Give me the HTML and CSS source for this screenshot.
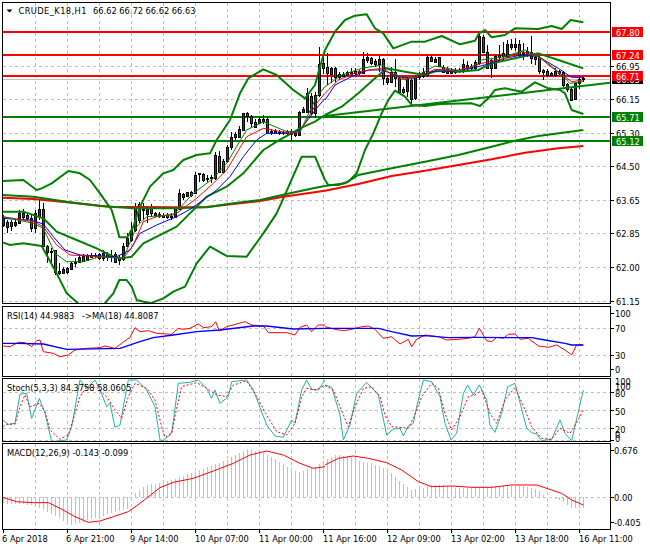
FILE: index.html
```html
<!DOCTYPE html>
<html lang="en">
<head>
<meta charset="utf-8">
<title>CRUDE_K18,H1</title>
<link rel="stylesheet" href="styles.css">
</head>
<body>
<main class="terminal">
  <svg class="pane" width="650" height="305" viewBox="0 0 650 305">
    <defs><clipPath id="clip-main"><rect x="3" y="3" width="607" height="300"/></clipPath></defs>
    <g clip-path="url(#clip-main)">
      <path class="grid" d="M35.5 3V303M67.5 3V303M99.5 3V303M131.5 3V303M163.5 3V303M195.5 3V303M227.5 3V303M259.5 3V303M291.5 3V303M323.5 3V303M355.5 3V303M387.5 3V303M419.5 3V303M451.5 3V303M483.5 3V303M515.5 3V303M547.5 3V303M579.5 3V303"/>
      <path class="grid" d="M3 66.5H610M3 99.5H610M3 133.5H610M3 166.5H610M3 200.5H610M3 233.5H610M3 267.5H610M3 301.5H610"/>
      <path class="bid" d="M3 79.5H610"/>
      <path class="level red" d="M3 32H610M3 55H610M3 76H610"/>
      <path class="level green" d="M3 117H610M3 141H610"/>
      <g id="candles"></g>
      <g transform="scale(.33333)">
        <polyline class="thick green" points="8,543 70,540 110,570 125,565 155,550 205,513 240,520 270,540 300,580 335,630 350,680 358,712 382,712 400,680 420,620 450,560 490,520 520,510 550,480 590,465 630,460 650,420 690,360 720,280 745,235 790,208 830,225 880,270 915,295 945,255 960,200 975,150"/>
        <polyline class="thick green" points="8,635 70,635 130,655 170,695 230,720 290,745 340,770 365,775 395,770 430,730 490,700 530,680 560,650 620,590 680,560 730,520 790,450 830,425 900,385 945,365 975,345"/>
        <polyline class="thick green" points="8,727 30,735 70,730 125,738 170,820 200,880 240,915 310,915 340,880 358,840 380,840 395,860 410,900 450,910 490,895 520,875 555,860 590,790 630,740 680,768 740,770 790,700 830,640 870,550 905,470 945,470 975,540"/>
        <polyline class="thick red" points="8,593 100,597 200,607 330,620 520,622 620,621 700,612 780,603 850,590 975,572"/>
        <polyline class="thick green" points="8,585 100,590 200,605 300,618 400,625 520,625 620,622 700,610 780,600 860,582 940,565 975,558"/>
        <polyline class="thin blue" points="8,655 50,658 90,660 130,672 160,710 195,750 240,765 300,768 350,770 390,750 420,700 470,675 530,650 570,628 610,600 650,570 690,530 730,470 770,420 800,400 870,400 900,390 950,325 975,295"/>
        <polyline class="thin red" points="8,650 100,665 130,680 170,735 210,765 300,770 370,775 400,735 430,665 470,650 530,640 590,595 640,550 680,510 740,410 790,385 870,400 900,395 950,310 975,280"/>
        <polyline class="thin green" points="8,650 100,670 130,685 165,760 200,785 250,785 300,770 370,775 410,680 440,650 520,645 580,580 640,535 680,490 740,390 790,365 860,395 900,395 950,290 975,260"/>
      </g>
      <g transform="translate(325 0) scale(.33333)">
        <polyline class="thick green" points="0,150 30,95 60,60 90,47 125,43 150,85 175,100 205,145 260,125 300,125 350,108 405,133 450,122 462,100 480,90 500,112 540,105 570,85 640,87 680,78 710,87 737,60 775,67"/>
        <polyline class="thick green" points="0,345 50,320 100,280 150,235 185,205 240,215 300,225 340,210 400,215 460,210 500,190 570,175 640,160 700,180 775,205"/>
        <polyline class="thick green" points="0,540 10,555 40,555 70,545 95,520 120,450 145,400 170,340 190,300 210,272 240,290 260,315 300,318 345,312 440,310 465,318 490,295 510,270 540,265 590,275 630,247 670,265 705,270 720,280 740,330 775,342"/>
        <polyline class="thick red" points="0,572 100,552 200,528 300,512 400,495 500,478 600,458 700,445 775,438"/>
        <polyline class="thick green" points="0,558 60,550 100,525 200,505 300,485 400,465 500,440 570,422 640,408 775,390"/>
        <polyline class="thick green" points="0,348 857,248"/>
        <polyline class="thin blue" points="0,300 30,255 80,230 130,210 170,210 230,232 270,235 320,215 370,215 440,205 480,195 540,175 590,165 640,170 700,205 740,232 775,232"/>
        <polyline class="thin red" points="0,280 40,240 100,215 170,205 230,238 280,230 330,208 400,212 470,190 540,175 590,155 640,170 690,210 740,245 775,240"/>
        <polyline class="thin green" points="0,260 50,225 110,205 170,195 240,240 280,225 330,198 420,215 470,180 540,170 600,150 650,175 700,215 735,250 775,245"/>
      </g>
    </g>
    <rect class="frame" x="2.5" y="2.5" width="608" height="301"/>
    <path class="marker" d="M6.5 9.5h6l-3 3z"/>
    <text class="label symbol" x="18.5" y="14">CRUDE_K18,H1</text>
    <text class="label" x="93" y="14">66.62 66.72 66.62 66.63</text>
    <path class="tick" d="M611 66.5h3M611 99.5h3M611 133.5h3M611 166.5h3M611 200.5h3M611 233.5h3M611 267.5h3M611 301.5h3"/>
    <text class="label" x="616" y="70">66.95</text>
    <text class="label" x="616" y="103">66.15</text>
    <text class="label" x="616" y="137">65.30</text>
    <text class="label" x="616" y="170">64.50</text>
    <text class="label" x="616" y="204">63.65</text>
    <text class="label" x="616" y="237">62.85</text>
    <text class="label" x="616" y="271">62.00</text>
    <text class="label" x="616" y="305">61.15</text>
    <rect class="tag-black" x="612" y="74" width="31" height="10"/>
    <text class="label on-tag" x="616" y="83">66.63</text>
    <rect class="tag-red" x="612" y="27" width="31" height="10"/>
    <text class="label on-tag" x="616" y="36">67.80</text>
    <rect class="tag-red" x="612" y="50" width="31" height="10"/>
    <text class="label on-tag" x="616" y="59">67.24</text>
    <rect class="tag-red" x="612" y="71" width="31" height="10"/>
    <text class="label on-tag" x="616" y="80">66.71</text>
    <rect class="tag-green" x="612" y="112" width="31" height="10"/>
    <text class="label on-tag" x="616" y="121">65.71</text>
    <rect class="tag-green" x="612" y="136" width="31" height="10"/>
    <text class="label on-tag" x="616" y="145">65.12</text>
  </svg>

  <svg class="pane" width="650" height="72" viewBox="0 305 650 72">
    <path class="grid" d="M35.5 307V376M67.5 307V376M99.5 307V376M131.5 307V376M163.5 307V376M195.5 307V376M227.5 307V376M259.5 307V376M291.5 307V376M323.5 307V376M355.5 307V376M387.5 307V376M419.5 307V376M451.5 307V376M483.5 307V376M515.5 307V376M547.5 307V376M579.5 307V376"/>
    <path class="grid" d="M3 328.5H610M3 355.5H610"/>
    <g transform="translate(0 300) scale(.33333)">
      <polyline class="thin red" points="8,138 30,140 55,127 75,128 95,140 110,122 120,120 130,155 160,160 180,170 205,165 225,150 260,145 300,143 315,138 345,145 365,130 390,112 405,83 420,95 445,92 470,100 515,103 535,85 550,88 570,85 595,72 610,83 635,80 647,65 658,93 680,80 710,72 735,65 755,75 790,78 805,98 860,98 885,105 900,82 920,75 935,95 955,75 975,75"/>
      <polyline class="mid blue" points="8,130 50,130 130,132 200,148 360,145 420,125 460,113 520,105 590,95 660,90 760,78 800,78 880,87 975,85"/>
    </g>
    <g transform="translate(325 300) scale(.33333)">
      <polyline class="thin red" points="0,80 30,88 55,92 80,88 110,80 130,78 150,88 175,115 200,110 225,132 250,118 260,140 275,118 300,105 340,110 365,120 400,118 430,115 450,110 463,85 485,122 500,125 515,112 535,115 550,103 570,102 585,118 610,115 640,138 670,142 695,135 720,150 740,165 755,135 775,135"/>
      <polyline class="mid blue" points="0,85 160,85 200,95 260,108 300,107 370,113 450,112 620,113 660,120 720,130 740,135 775,135"/>
    </g>
    <rect class="frame" x="2.5" y="306.5" width="608" height="70"/>
    <text class="label" x="7" y="319">RSI(14) 44.9883   -&gt;MA(18) 44.8087</text>
    <path class="tick" d="M611 313.5h3M611 328.5h3M611 355.5h3M611 369.5h3"/>
    <text class="label" x="615" y="317">100</text>
    <text class="label" x="615" y="332">70</text>
    <text class="label" x="615" y="359">30</text>
    <text class="label" x="615" y="373">0</text>
  </svg>

  <svg class="pane" width="650" height="65" viewBox="0 377 650 65">
    <defs><clipPath id="clip-stoch"><rect x="3" y="379" width="607" height="62"/></clipPath></defs>
    <path class="grid" d="M35.5 379V441M67.5 379V441M99.5 379V441M131.5 379V441M163.5 379V441M195.5 379V441M227.5 379V441M259.5 379V441M291.5 379V441M323.5 379V441M355.5 379V441M387.5 379V441M419.5 379V441M451.5 379V441M483.5 379V441M515.5 379V441M547.5 379V441M579.5 379V441"/>
    <path class="grid" d="M3 392.5H610M3 410.5H610M3 428.5H610M3 440.5H610"/>
    <g clip-path="url(#clip-stoch)">
      <g transform="translate(0 300) scale(.33333)">
        <polyline class="thin teal" points="8,360 25,373 45,370 60,282 80,280 95,355 118,295 135,340 155,425 200,420 215,380 240,240 260,265 285,240 300,270 320,320 330,310 345,382 360,375 385,240 410,240 440,270 465,320 480,420 490,422 515,400 535,250 570,247 595,240 620,265 635,295 645,270 660,310 685,290 695,245 740,240 760,270 800,375 825,408 850,412 875,360 885,370 905,270 920,240 935,268 955,270 975,240"/>
        <polyline class="thin dashed" points="8,380 20,373 45,372 60,320 75,285 90,320 118,310 135,335 150,390 180,418 205,405 225,340 240,290 260,262 290,262 320,290 345,330 365,355 385,290 405,250 440,265 465,300 485,380 495,412 515,400 530,325 545,260 590,248 620,265 650,285 680,290 700,255 740,243 770,290 800,345 830,395 860,405 885,370 905,290 920,265 950,270 975,255"/>
      </g>
      <g transform="translate(325 300) scale(.33333)">
        <polyline class="thin teal" points="0,255 20,262 45,345 55,420 75,375 95,280 125,247 160,285 185,405 205,387 225,385 235,408 250,378 265,370 275,320 295,240 320,245 345,290 360,370 378,420 395,400 415,280 428,255 445,285 463,255 485,300 495,375 510,397 530,340 548,260 570,250 605,385 620,398 635,402 650,422 680,418 705,360 720,400 740,422 775,270"/>
        <polyline class="thin dashed" points="0,257 25,270 45,320 70,380 90,320 115,265 140,260 165,290 180,345 200,380 225,382 250,385 265,355 290,290 320,250 340,265 360,340 380,390 405,350 430,290 450,285 470,270 495,340 515,370 540,300 570,262 600,330 620,380 650,415 680,418 705,385 735,400 765,350 775,328"/>
      </g>
    </g>
    <rect class="frame" x="2.5" y="378.5" width="608" height="63"/>
    <text class="label" x="7" y="391">Stoch(5,3,3) 84.3758 58.0605</text>
    <path class="tick" d="M611 392.5h3M611 410.5h3M611 428.5h3M611 440.5h3"/>
    <text class="label" x="615" y="385">100</text>
    <text class="label" x="615" y="389.5">100</text>
    <text class="label" x="615" y="396.5">80</text>
    <text class="label" x="615" y="414.5">50</text>
    <text class="label" x="615" y="432.5">20</text>
    <text class="label" x="615" y="438">0</text>
    <text class="label" x="615" y="442">0</text>
  </svg>

  <svg class="pane" width="650" height="108" viewBox="0 442 650 108">
    <path class="grid" d="M35.5 444V529M67.5 444V529M99.5 444V529M131.5 444V529M163.5 444V529M195.5 444V529M227.5 444V529M259.5 444V529M291.5 444V529M323.5 444V529M355.5 444V529M387.5 444V529M419.5 444V529M451.5 444V529M483.5 444V529M515.5 444V529M547.5 444V529M579.5 444V529"/>
    <path class="grid" d="M3 497.5H610"/>
    <g id="histogram"></g>
    <g transform="translate(0 300) scale(.33333)">
      <polyline class="thin red" points="8,592 50,605 100,608 145,608 180,625 225,650 265,667 300,663 340,650 385,635 420,610 480,563 520,547 580,535 640,513 700,490 750,465 800,453 850,465 900,490 940,505 975,500"/>
    </g>
    <g transform="translate(325 300) scale(.33333)">
      <polyline class="thin red" points="0,495 40,475 85,468 130,475 185,488 230,510 280,545 320,560 380,558 440,562 500,562 560,555 635,555 680,570 710,580 740,600 775,615"/>
    </g>
    <rect class="frame" x="2.5" y="443.5" width="608" height="86"/>
    <text class="label" x="7" y="456">MACD(12,26,9) -0.143 -0.099</text>
    <path class="tick" d="M611 450.5h3M611 497.5h3M611 522.5h3"/>
    <text class="label" x="614" y="454">0.676</text>
    <text class="label" x="614" y="501">0.00</text>
    <text class="label" x="614" y="526">-0.405</text>
    <path class="tick" d="M3.5 530v3M67.5 530v3M131.5 530v3M195.5 530v3M259.5 530v3M323.5 530v3M387.5 530v3M451.5 530v3M515.5 530v3M579.5 530v3"/>
    <text class="label" x="2" y="542">6 Apr 2018</text>
    <text class="label" x="66" y="542">6 Apr 21:00</text>
    <text class="label" x="130" y="542">9 Apr 14:00</text>
    <text class="label" x="195" y="542">10 Apr 07:00</text>
    <text class="label" x="259" y="542">11 Apr 00:00</text>
    <text class="label" x="323" y="542">11 Apr 16:00</text>
    <text class="label" x="387" y="542">12 Apr 09:00</text>
    <text class="label" x="451" y="542">13 Apr 02:00</text>
    <text class="label" x="515" y="542">13 Apr 18:00</text>
    <text class="label" x="579" y="542">16 Apr 11:00</text>
  </svg>
</main>
<script src="chart.js"></script>
</body>
</html>
```
FILE: styles.css
```css
html, body {
  margin: 0;
  padding: 0;
  background: #fff;
}
.terminal {
  display: flex;
  flex-direction: column;
  width: 650px;
  height: 550px;
  overflow: hidden;
}
.pane {
  display: block;
  flex: none;
  overflow: visible;
}
.grid {
  fill: none;
  stroke: #c0c0c0;
  stroke-width: 1;
  stroke-dasharray: 3 3;
  shape-rendering: crispEdges;
}
.bid {
  fill: none;
  stroke: #c0c0c0;
  stroke-width: 1;
  shape-rendering: crispEdges;
}
.level {
  fill: none;
  stroke-width: 2;
  shape-rendering: crispEdges;
}
.level.red { stroke: #ff0000; }
.level.green { stroke: #008000; }
polyline {
  fill: none;
  stroke-linejoin: round;
  vector-effect: non-scaling-stroke;
}
.thick { stroke-width: 2; }
.mid { stroke-width: 1.3; }
.thin { stroke-width: 1; }
polyline.green { stroke: #008000; }
polyline.red { stroke: #ff0000; }
polyline.blue { stroke: #0000ff; }
polyline.teal { stroke: #20b2aa; }
polyline.dashed { stroke: #ff0000; stroke-dasharray: 2 2; }
.frame {
  fill: none;
  stroke: #000;
  stroke-width: 1;
  shape-rendering: crispEdges;
}
.tick {
  fill: none;
  stroke: #000;
  stroke-width: 1;
  shape-rendering: crispEdges;
}
.marker { fill: #000; }
.label {
  font-family: "DejaVu Sans Condensed", "DejaVu Sans", sans-serif;
  font-stretch: condensed;
  font-size: 9.2px;
  fill: #000;
  white-space: pre;
}
.label.symbol { letter-spacing: 0.42px; }
.label.on-tag { fill: #fff; }
.tag-red { fill: #ff0000; }
.tag-green { fill: #008000; }
.tag-black { fill: #000; }
.wick {
  stroke: #000;
  stroke-width: 1;
  shape-rendering: crispEdges;
}
.body-bull {
  fill: #006400;
  stroke: #000;
  stroke-width: 1;
  shape-rendering: crispEdges;
}
.body-bear {
  fill: #ff0000;
  stroke: #000;
  stroke-width: 1;
  shape-rendering: crispEdges;
}
.hist {
  stroke: #c0c0c0;
  stroke-width: 1;
  shape-rendering: crispEdges;
}
```
FILE: chart.js
```js
var NS = 'http://www.w3.org/2000/svg';

// type, body top, body bottom, wick top, wick bottom (1/3 px units, read off the chart)
var CANDLES = 'g655,675,645,680 r665,680,660,700 r665,678,660,692 g667,675,660,680 g640,670,630,672 r640,650,628,660 r645,655,640,660 r655,685,645,697 g640,685,630,700 g628,648,600,660 r628,738,610,740 r737,755,735,790 g752,755,745,785 r750,815,750,825 g812,820,790,825 g808,818,800,822 r805,815,800,822 g788,808,785,810 g785,790,775,800 g770,785,765,790 r767,782,762,785 g768,780,762,782 g765,770,760,775 g764,768,758,775 r763,775,760,780 g760,775,750,782 g762,770,755,782 g765,768,750,785 r763,785,755,790 r770,780,765,795 g738,778,730,782 g715,738,700,740 g690,720,665,725 g618,690,610,695 r612,660,605,668 g628,630,610,660 g622,642,618,668 r622,638,612,650 g640,646,635,652 g642,648,635,655 g644,650,638,655 g646,652,640,658 g648,652,640,660 g625,650,620,655 g580,628,568,630 g583,590,578,600 g577,588,575,592 r576,584,572,590 g525,580,515,582 g520,522,518,545 r522,540,518,545 g533,537,525,545 g530,535,525,550 g465,535,455,540 r467,515,452,520 r482,515,478,520 g442,482,435,490 g410,442,395,450 g402,412,395,420 g388,412,378,415 g340,390,338,392 r340,348,335,365 r347,370,345,385 g365,382,358,385 g358,368,352,372 g357,363,345,372 r357,398,352,402 g393,400,388,404 g394,398,388,402 g395,400,390,404 g395,398,392,405 g392,400,390,406 r392,402,388,422 g400,405,390,410 g336,405,332,408 g328,335,320,340 g280,335,265,340 r288,340,280,345 g285,340,275,355 g192,285,142,290 r190,205,160,222 r202,218,160,255 g205,222,200,250 r205,232,200,245 g222,230,215,240 g222,228,215,232 g217,225,212,230 g216,222,205,228 g214,220,205,226 g214,218,210,225 g178,218,155,222 g172,180,158,190 r175,190,170,195 r184,192,178,200 g178,192,168,215 r178,235,175,255 r235,245,225,255 g215,245,200,250 r215,235,178,262 r235,275,232,280 g268,275,260,282 g238,272,230,290 r240,298,238,315 g228,295,225,300 g225,232,215,240 g215,228,205,235 g170,225,165,232 r172,182,165,185 g178,185,170,190 r172,198,170,200 r200,215,195,220 g208,218,200,222 g210,218,205,222 g210,216,205,222 g210,214,205,220 g192,212,178,218 g195,203,183,212 g198,205,192,210 g185,205,180,212 g107,190,100,195 r110,155,105,160 r155,205,135,208 r180,205,178,235 g168,205,165,208 g165,172,135,185 g160,168,125,180 g132,168,120,175 g133,142,118,150 g132,142,115,152 r132,165,120,170 g155,163,130,180 g153,160,140,170 r155,175,108,192 g172,178,165,195 r172,212,168,222 g210,215,208,240 r212,226,208,230 g218,226,215,228 g214,224,205,230 g214,220,210,225 r215,255,212,260 r253,268,250,275 r267,300,262,302 g250,298,248,300 g238,250,228,268 g233,236,228,245';

// MACD histogram tips: [x, y] anchors in 1/3 px units, interpolated per bar
var HIST = [[8,610],[100,615],[150,640],[215,675],[300,650],[385,625],[400,592],[405,580],[440,555],[500,545],[600,510],[680,480],[745,445],[790,460],[830,480],[880,510],[900,515],[950,500],[975,480],[1005,465],[1055,470],[1085,485],[1115,490],[1145,500],[1175,520],[1200,545],[1235,570],[1265,565],[1295,555],[1325,555],[1375,565],[1445,565],[1475,558],[1575,558],[1615,570],[1635,590],[1665,597],[1690,605],[1715,625],[1750,625]];

function el(name, attrs) {
  var node = document.createElementNS(NS, name);
  for (var key in attrs) node.setAttribute(key, attrs[key]);
  return node;
}

function px(v) { return Math.round(v / 3); }

function drawCandles() {
  var group = document.getElementById('candles');
  CANDLES.split(' ').forEach(function (item, k) {
    var v = item.slice(1).split(',').map(Number);
    var x = 3 + 4 * k;
    var top = px(v[0]);
    var bottom = Math.max(px(v[1]), top);
    group.appendChild(el('line', {
      class: 'wick', x1: x + 0.5, x2: x + 0.5, y1: px(v[2]), y2: px(v[3])
    }));
    group.appendChild(el('rect', {
      class: item[0] === 'g' ? 'body-bull' : 'body-bear',
      x: x - 0.5, y: top + 0.5, width: 2, height: bottom - top
    }));
  });
}

function histTip(zx) {
  for (var i = 1; i < HIST.length; i++) {
    if (zx <= HIST[i][0]) {
      var a = HIST[i - 1], b = HIST[i];
      return a[1] + (b[1] - a[1]) * (zx - a[0]) / (b[0] - a[0]);
    }
  }
  return HIST[HIST.length - 1][1];
}

function drawHistogram() {
  var group = document.getElementById('histogram');
  for (var k = 0; k < 146; k++) {
    var x = 3.5 + 4 * k;
    group.appendChild(el('line', {
      class: 'hist', x1: x, x2: x, y1: 497, y2: 300 + px(histTip(x * 3))
    }));
  }
}

drawCandles();
drawHistogram();
```
